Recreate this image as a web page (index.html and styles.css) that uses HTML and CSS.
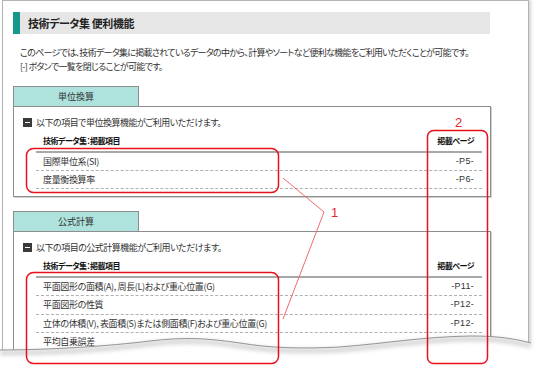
FILE: index.html
```html
<!DOCTYPE html>
<html lang="ja">
<head>
  <meta charset="UTF-8" />
  <title>技術データ集 便利機能</title>
  <link rel="stylesheet" href="styles.css">
</head>
<body>
  <div class="page">
    <div class="sheet">
      <h1 class="title">技術データ集 便利機能</h1>
      <p class="desc">
        このページでは、技術データ集に掲載されているデータの中から、計算やソートなど便利な機能をご利用いただくことが可能です。<br>
        [-] ボタンで一覧を閉じることが可能です。
      </p>

      <div class="tab">単位換算</div>
      <div class="box">
        <p class="intro"><span class="minus"></span>以下の項目で単位換算機能がご利用いただけます。</p>
        <div class="row head"><span>技術データ集：掲載項目</span><span>掲載ページ</span></div>
        <div class="row"><span>国際単位系(SI)</span><span class="pg">-P5-</span></div>
        <div class="row"><span>度量衡換算率</span><span class="pg">-P6-</span></div>
      </div>

      <div class="tab tab-second">公式計算</div>
      <div class="box box-long">
        <p class="intro"><span class="minus"></span>以下の項目の公式計算機能がご利用いただけます。</p>
        <div class="row head"><span>技術データ集：掲載項目</span><span>掲載ページ</span></div>
        <div class="row"><span>平面図形の面積(A), 周長(L)および重心位置(G)</span><span class="pg">-P11-</span></div>
        <div class="row"><span>平面図形の性質</span><span class="pg">-P12-</span></div>
        <div class="row"><span>立体の体積(V), 表面積(S)または側面積(F)および重心位置(G)</span><span class="pg">-P12-</span></div>
        <div class="row"><span>平均自乗誤差</span><span class="pg">-P13-</span></div>
        <div class="row"><span>&nbsp;</span><span></span></div>
      </div>
    </div>

    <!-- torn bottom edge -->
    <svg class="tear" width="540" height="377" viewBox="0 0 540 377">
      <defs>
        <filter id="soft" x="-5%" y="-50%" width="110%" height="200%">
          <feGaussianBlur stdDeviation="2" />
        </filter>
      </defs>
      <path d="M0,350 C50,350 110,346 150,341 C185,337 205,338 240,343 C270,348 300,349 340,347 C390,343 420,337 470,336 C500,336 515,339 531,343 L540,343 L540,377 L0,377 Z"
            fill="#fff" />
      <path d="M0,353 C50,353 110,349 150,344 C185,340 205,341 240,346 C270,351 300,352 340,350 C390,346 420,340 470,339 C500,339 515,342 531,346"
            fill="none" stroke="#b8b8b8" stroke-width="4" opacity="0.7" filter="url(#soft)" />
      <path d="M0,350 C50,350 110,346 150,341 C185,337 205,338 240,343 C270,348 300,349 340,347 C390,343 420,337 470,336 C500,336 515,339 531,343"
            fill="none" stroke="#959595" stroke-width="1" />
    </svg>

    <!-- annotations -->
    <svg class="notes" width="540" height="377" viewBox="0 0 540 377">
      <rect x="26.5" y="148.5" width="252" height="44" rx="7" fill="none" stroke="#e8101a" stroke-width="1.5" />
      <rect x="26.5" y="272.5" width="252" height="91" rx="7" fill="none" stroke="#e8101a" stroke-width="1.5" />
      <rect x="427.5" y="130.5" width="60" height="233" rx="6" fill="none" stroke="#e8101a" stroke-width="1.5" />
      <polyline points="283,178 324,212 283,319" fill="none" stroke="#f26a6a" stroke-width="1" />
      <text x="331" y="217" class="num">1</text>
      <text x="455" y="127" class="num">2</text>
    </svg>
  </div>
</body>
</html>
```

FILE: styles.css
```css
body {
  margin: 0;
  background: #fff;
  font-family: "Noto Sans CJK JP", "Noto Sans", sans-serif;
  color: #222;
}

.page {
  position: relative;
  width: 540px;
  height: 377px;
  overflow: hidden;
}

.sheet {
  box-sizing: border-box;
  margin-left: 2px;
  width: 527px;
  height: 377px;
  padding: 11px 0 0 10px;
  border: 1px solid #b3b3b3;
  box-shadow: 2px 0 3px rgba(0,0,0,0.18);
  background: #fff;
}

.title {
  box-sizing: border-box;
  margin: 0;
  width: 477px;
  height: 22px;
  padding-left: 8px;
  border-left: 7px solid #16998a;
  background: #e6e6e6;
  font-size: 11px;
  font-weight: bold;
  line-height: 22px;
  letter-spacing: -0.4px;
  color: #222;
  font-feature-settings: "palt";
}

.desc {
  margin: 12px 0 0 7px;
  font-size: 9px;
  line-height: 14px;
  color: #333;
  font-feature-settings: "palt";
  letter-spacing: -0.7px;
  white-space: nowrap;
}

.tab {
  box-sizing: border-box;
  margin-top: 12px;
  width: 126px;
  height: 20px;
  border: 1px solid #8d8d8d;
  border-bottom: none;
  background: #ade2dd;
  text-align: center;
  font-size: 9px;
  line-height: 19px;
  color: #333;
  font-feature-settings: "palt";
}

.tab-second {
  margin-top: 14px;
}

.box {
  box-sizing: border-box;
  width: 478px;
  padding: 7px 8px 7px 9px;
  border: 1px solid #8d8d8d;
  box-shadow: 1px 1px 0 #d0d0d0;
}

.intro {
  display: flex;
  align-items: center;
  margin: 0;
  height: 16px;
  font-size: 9px;
  letter-spacing: -0.5px;
  color: #333;
  font-feature-settings: "palt";
}

.minus {
  position: relative;
  flex: none;
  width: 9px;
  height: 9px;
  margin-right: 4px;
  background: #3a3a3a;
}

.minus::after {
  content: "";
  position: absolute;
  left: 2px;
  top: 4px;
  width: 5px;
  height: 1px;
  background: #fff;
}

.row {
  display: flex;
  justify-content: space-between;
  margin-left: 13px;
  padding: 0 8px 0 7px;
  height: 17px;
  line-height: 17px;
  border-bottom: 1px dashed #b0b0b0;
  font-size: 9px;
  letter-spacing: -0.35px;
  color: #333;
  font-feature-settings: "palt";
  white-space: nowrap;
}

.box-long .row {
  height: 17.4px;
  line-height: 17.4px;
}

.row.head,
.box-long .row.head {
  margin-top: 3px;
  height: 16px;
  line-height: 16px;
  padding-bottom: 2px;
  border-bottom: 2px solid #a8a8a8;
  font-size: 8px;
  letter-spacing: -0.5px;
  font-weight: bold;
  color: #111;
}

.pg {
  font-family: "Liberation Sans", sans-serif;
  font-size: 9px;
  letter-spacing: 0.3px;
}

.tear,
.notes {
  position: absolute;
  left: 0;
  top: 0;
}

.num {
  font-family: "Liberation Sans", sans-serif;
  font-size: 13px;
  fill: #e8242c;
}
```
